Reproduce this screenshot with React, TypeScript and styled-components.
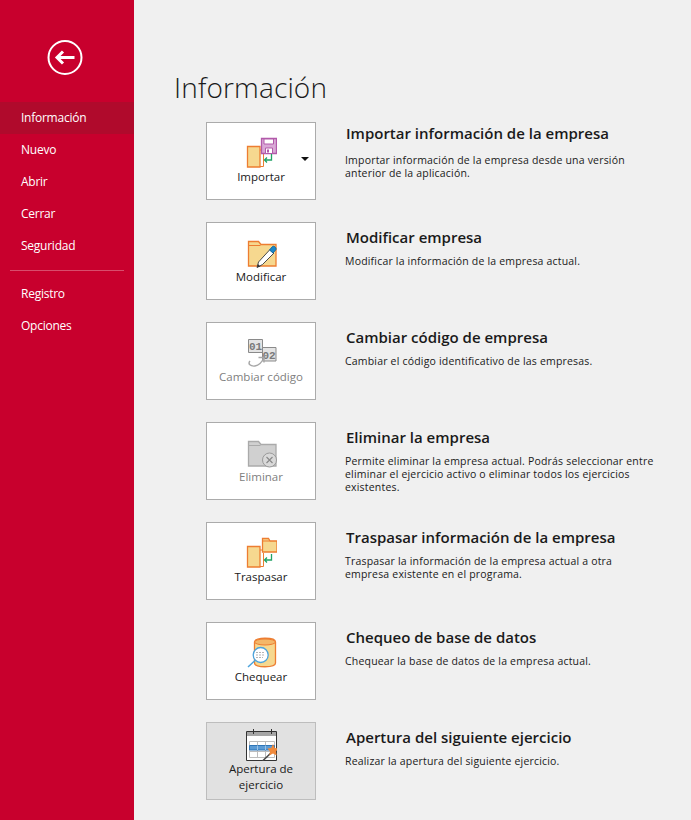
import React from 'react'
import styled, { createGlobalStyle } from 'styled-components'

const GlobalStyle = createGlobalStyle`
  html, body {
    margin: 0;
    padding: 0;
    background: #f0f0f0;
    font-family: 'Open Sans', 'Noto Sans', sans-serif;
  }
`

const Page = styled.div`
  display: flex;
  width: 691px;
  height: 820px;
  overflow: hidden;
`

const Sidebar = styled.nav`
  width: 134px;
  flex-shrink: 0;
  background: #c8002d;
  color: #fff;
  padding-top: 40px;
  box-sizing: border-box;
`

const BackButton = styled.button`
  display: block;
  width: 36px;
  height: 36px;
  margin: 0 0 26px 47px;
  padding: 0;
  background: none;
  border: none;
  cursor: pointer;
`

const NavItem = styled.div<{ $active?: boolean }>`
  height: 32px;
  line-height: 32px;
  padding-left: 21px;
  font-size: 12px;
  letter-spacing: -0.25px;
  background: ${(props) => (props.$active ? '#b00a2c' : 'transparent')};
`

const NavDivider = styled.div`
  height: 1px;
  margin: 8px 10px 7px;
  background: rgba(255, 255, 255, 0.3);
`

const Main = styled.main`
  flex: 1;
  padding: 68px 0 0 41px;
`

const Heading = styled.h1`
  margin: 0 0 16px -1px;
  height: 38px;
  line-height: 38px;
  font-size: 28px;
  font-weight: 300;
  letter-spacing: 0.15px;
  color: #1a1a1a;
`

const ActionList = styled.div`
  display: flex;
  flex-direction: column;
  gap: 22px;
  padding-left: 31px;
`

const ActionRow = styled.section`
  display: flex;
  gap: 30px;
`

const ActionButton = styled.button<{ $selected?: boolean; $disabled?: boolean }>`
  position: relative;
  display: flex;
  flex-direction: column;
  align-items: center;
  justify-content: center;
  flex-shrink: 0;
  width: 110px;
  height: 78px;
  padding: 0;
  box-sizing: border-box;
  border: 1px solid ${(props) => (props.$selected ? '#bdbdbd' : '#ababab')};
  background: ${(props) => (props.$selected ? '#e1e1e1' : '#fff')};
  color: ${(props) => (props.$disabled ? '#808080' : '#1a1a1a')};
  font-family: inherit;
  cursor: pointer;
`

const ActionLabel = styled.span`
  display: block;
  width: 90px;
  font-size: 11.5px;
  line-height: 16px;
  text-align: center;
  white-space: pre-line;
`

const Caret = styled.span`
  position: absolute;
  top: 34px;
  right: 6px;
  width: 0;
  height: 0;
  border-left: 4px solid transparent;
  border-right: 4px solid transparent;
  border-top: 4px solid #111;
`

const ActionText = styled.div<{ $raised?: boolean }>`
  padding-top: ${(props) => (props.$raised ? '0' : '4px')};
  width: 310px;
`

const ActionTitle = styled.h2`
  margin: 0 0 7px;
  height: 22px;
  line-height: 22px;
  font-size: 15px;
  font-weight: 600;
  color: #1a1a1a;
  white-space: nowrap;
`

const ActionDescription = styled.p<{ $spaced?: boolean }>`
  margin: ${(props) => (props.$spaced ? '10px' : '0')} 0 0 -1px;
  font-size: 10.5px;
  line-height: 13px;
  letter-spacing: 0.19px;
  color: #1a1a1a;
`

const IconSvg = styled.svg`
  display: block;
  width: 32px;
  height: 32px;
  flex-shrink: 0;
`

const Sheet = () => (
  <g>
    <path d="M15 13h3l1.500-2" fill="none" stroke="#ed7d31" />
    <path d="M15 29.500h3.500V16" fill="none" stroke="#ed7d31" />
    <path d="M2.500 9.500h12.500v20.500H2.500z" fill="#f6d88f" stroke="#ed7d31" strokeWidth="1.300" />
  </g>
)

const GreenArrow = () => (
  <path d="M26.500 17v6h-7M22 20.500l-2.500 2.500 2.500 2.500" fill="none" stroke="#21a366" strokeWidth="1.300" />
)

const ImportIcon = () => (
  <IconSvg viewBox="0 0 32 32">
    <Sheet />
    <path d="M16.500 1.500h15v15h-15z" fill="#d9a9d6" stroke="#b25aaa" strokeWidth="1.300" />
    <path d="M19 2h9.500v5H19zM20.500 11h7v5.500h-7z" fill="#fff" stroke="#b25aaa" />
    <path d="M22 12.500h2v3h-2z" fill="#b25aaa" />
    <GreenArrow />
  </IconSvg>
)

const ModifyIcon = () => (
  <IconSvg viewBox="0 0 32 32">
    <path d="M3.500 9V4.500h10l2.500 3h15V29H3.500z" fill="#f6d88f" stroke="#ed7d31" strokeWidth="1.300" />
    <path d="M3.500 8.500h12" fill="none" stroke="#ed7d31" />
    <path d="M12 30.500l1.500-5.500L25 12.500l4 3.500-11.500 11.500z" fill="#fff" stroke="#4a4a4a" />
    <path d="M24.500 13l3-3.500c1.500-1 4 1 3.500 3l-3 3.500z" fill="#1b87c9" stroke="#136a9e" />
    <path d="M12 30.500l1-3.500 2.500 2.500z" fill="#333" />
  </IconSvg>
)

const CodeText = styled.text`
  font-family: 'Liberation Mono', monospace;
  font-size: 11px;
  font-weight: 700;
  fill: #7a7a7a;
`

const ChangeCodeIcon = () => (
  <IconSvg viewBox="0 0 32 32">
    <path d="M3.500 2.500h14v13h-14z" fill="#e4e4e4" stroke="#8a8a8a" />
    <CodeText x="4" y="13">01</CodeText>
    <path d="M17.500 10.500h13.500v13.500H17.500z" fill="#e4e4e4" stroke="#8a8a8a" />
    <CodeText x="17.500" y="21.500">02</CodeText>
    <path d="M5 24c-2.500 3 .5 5.500 5 5 4-.5 7-4 9-8.500M13.500 20.500h5.500v5" fill="none" stroke="#a6a6a6" strokeWidth="1.400" />
  </IconSvg>
)

const DeleteIcon = () => (
  <IconSvg viewBox="0 0 32 32">
    <path d="M3.500 9V4.500h10l2.500 3h15V29H3.500z" fill="#d0d0d0" stroke="#aaa" strokeWidth="1.300" />
    <path d="M3.500 8.500h12" fill="none" stroke="#aaa" />
    <circle cx="24.500" cy="23" r="7" fill="#d9d9d9" stroke="#9a9a9a" />
    <path d="M21.500 20l6 6M27.500 20l-6 6" stroke="#8a8a8a" strokeWidth="1.200" />
  </IconSvg>
)

const TransferIcon = () => (
  <IconSvg viewBox="0 0 32 32">
    <Sheet />
    <path d="M17.500 4V1.500h6l1.500 2.500h7v11H17.500z" fill="#f6d88f" stroke="#ed7d31" strokeWidth="1.300" />
    <path d="M17.500 4h7" fill="none" stroke="#ed7d31" />
    <GreenArrow />
  </IconSvg>
)

const CheckIcon = () => (
  <IconSvg viewBox="0 0 32 32">
    <path d="M9.500 5c0-5 21-5 21 0v21c0 5-21 5-21 0z" fill="#f6d88f" stroke="#ed7d31" strokeWidth="1.300" />
    <ellipse cx="20" cy="5" rx="10.500" ry="3" fill="#f3b769" stroke="#ed7d31" />
    <path d="M10 23.500L3 30" stroke="#4ba3dc" strokeWidth="1.500" />
    <circle cx="15.700" cy="18" r="7.500" fill="#fff" stroke="#4ba3dc" strokeWidth="1.300" />
    <path d="M11 15.500h9M11 18h9M11 20.500h7" stroke="#b5b5b5" strokeDasharray="2 1" />
  </IconSvg>
)

const OpeningIcon = () => (
  <IconSvg viewBox="0 0 32 32">
    <path d="M1.500 2.500h30v29h-30z" fill="#fff" stroke="#333" />
    <path d="M2 3h29v4H2z" fill="#a6a6a6" />
    <path d="M8.500 0v5M26.500 0v5" stroke="#333" />
    <path d="M4.500 12.500h25v16h-25zM4.500 22.500h25M12.500 12.500v16M20.500 12.500v16" fill="none" stroke="#bdbdbd" />
    <path d="M4.500 16.500h25v4.500h-25z" fill="#5b9bd5" stroke="#2e75b6" />
    <path d="M12.500 16.500v4.500M20.500 16.500v4.500" stroke="#9dc3e6" />
    <path d="M17.500 32L27 23" stroke="#444" strokeWidth="1.500" />
    <path d="M28 15l1.800 4 3.700.5-2.500 3 .7 4-3.700-2-3.700 2 .7-4-2.500-3 3.700-.5z" fill="#f08a3c" />
  </IconSvg>
)

const actions = [
  {
    label: 'Importar',
    icon: <ImportIcon />,
    title: 'Importar información de la empresa',
    description: 'Importar información de la empresa desde una versión anterior de la aplicación.',
    spaced: true,
    menu: true,
  },
  {
    label: 'Modificar',
    icon: <ModifyIcon />,
    title: 'Modificar empresa',
    description: 'Modificar la información de la empresa actual.',
  },
  {
    label: 'Cambiar código',
    icon: <ChangeCodeIcon />,
    title: 'Cambiar código de empresa',
    description: 'Cambiar el código identificativo de las empresas.',
    disabled: true,
  },
  {
    label: 'Eliminar',
    icon: <DeleteIcon />,
    title: 'Eliminar la empresa',
    description:
      'Permite eliminar la empresa actual. Podrás seleccionar entre eliminar el ejercicio activo o eliminar todos los ejercicios existentes.',
    disabled: true,
  },
  {
    label: 'Traspasar',
    icon: <TransferIcon />,
    title: 'Traspasar información de la empresa',
    description: 'Traspasar la información de la empresa actual a otra empresa existente en el programa.',
  },
  {
    label: 'Chequear',
    icon: <CheckIcon />,
    title: 'Chequeo de base de datos',
    description: 'Chequear la base de datos de la empresa actual.',
  },
  {
    label: 'Apertura de\nejercicio',
    icon: <OpeningIcon />,
    title: 'Apertura del siguiente ejercicio',
    description: 'Realizar la apertura del siguiente ejercicio.',
    selected: true,
  },
]

const App: React.FC = () => (
  <>
    <GlobalStyle />
    <Page>
      <Sidebar>
        <BackButton aria-label="Volver">
          <svg width="36" height="36" viewBox="0 0 36 36">
            <circle cx="18" cy="17.500" r="16.500" fill="none" stroke="#fff" strokeWidth="2" />
            <path d="M11 17.500h16.500" stroke="#fff" strokeWidth="3" />
            <path d="M16 11.500l-6 6 6 6" fill="none" stroke="#fff" strokeWidth="3" />
          </svg>
        </BackButton>
        <NavItem $active>Información</NavItem>
        <NavItem>Nuevo</NavItem>
        <NavItem>Abrir</NavItem>
        <NavItem>Cerrar</NavItem>
        <NavItem>Seguridad</NavItem>
        <NavDivider />
        <NavItem>Registro</NavItem>
        <NavItem>Opciones</NavItem>
      </Sidebar>
      <Main>
        <Heading>Información</Heading>
        <ActionList>
          {actions.map((action) => (
            <ActionRow key={action.title}>
              <ActionButton $selected={action.selected} $disabled={action.disabled}>
                {action.icon}
                <ActionLabel>{action.label}</ActionLabel>
                {action.menu && <Caret />}
              </ActionButton>
              <ActionText $raised={action.spaced}>
                <ActionTitle>{action.title}</ActionTitle>
                <ActionDescription $spaced={action.spaced}>{action.description}</ActionDescription>
              </ActionText>
            </ActionRow>
          ))}
        </ActionList>
      </Main>
    </Page>
  </>
)

export default App
